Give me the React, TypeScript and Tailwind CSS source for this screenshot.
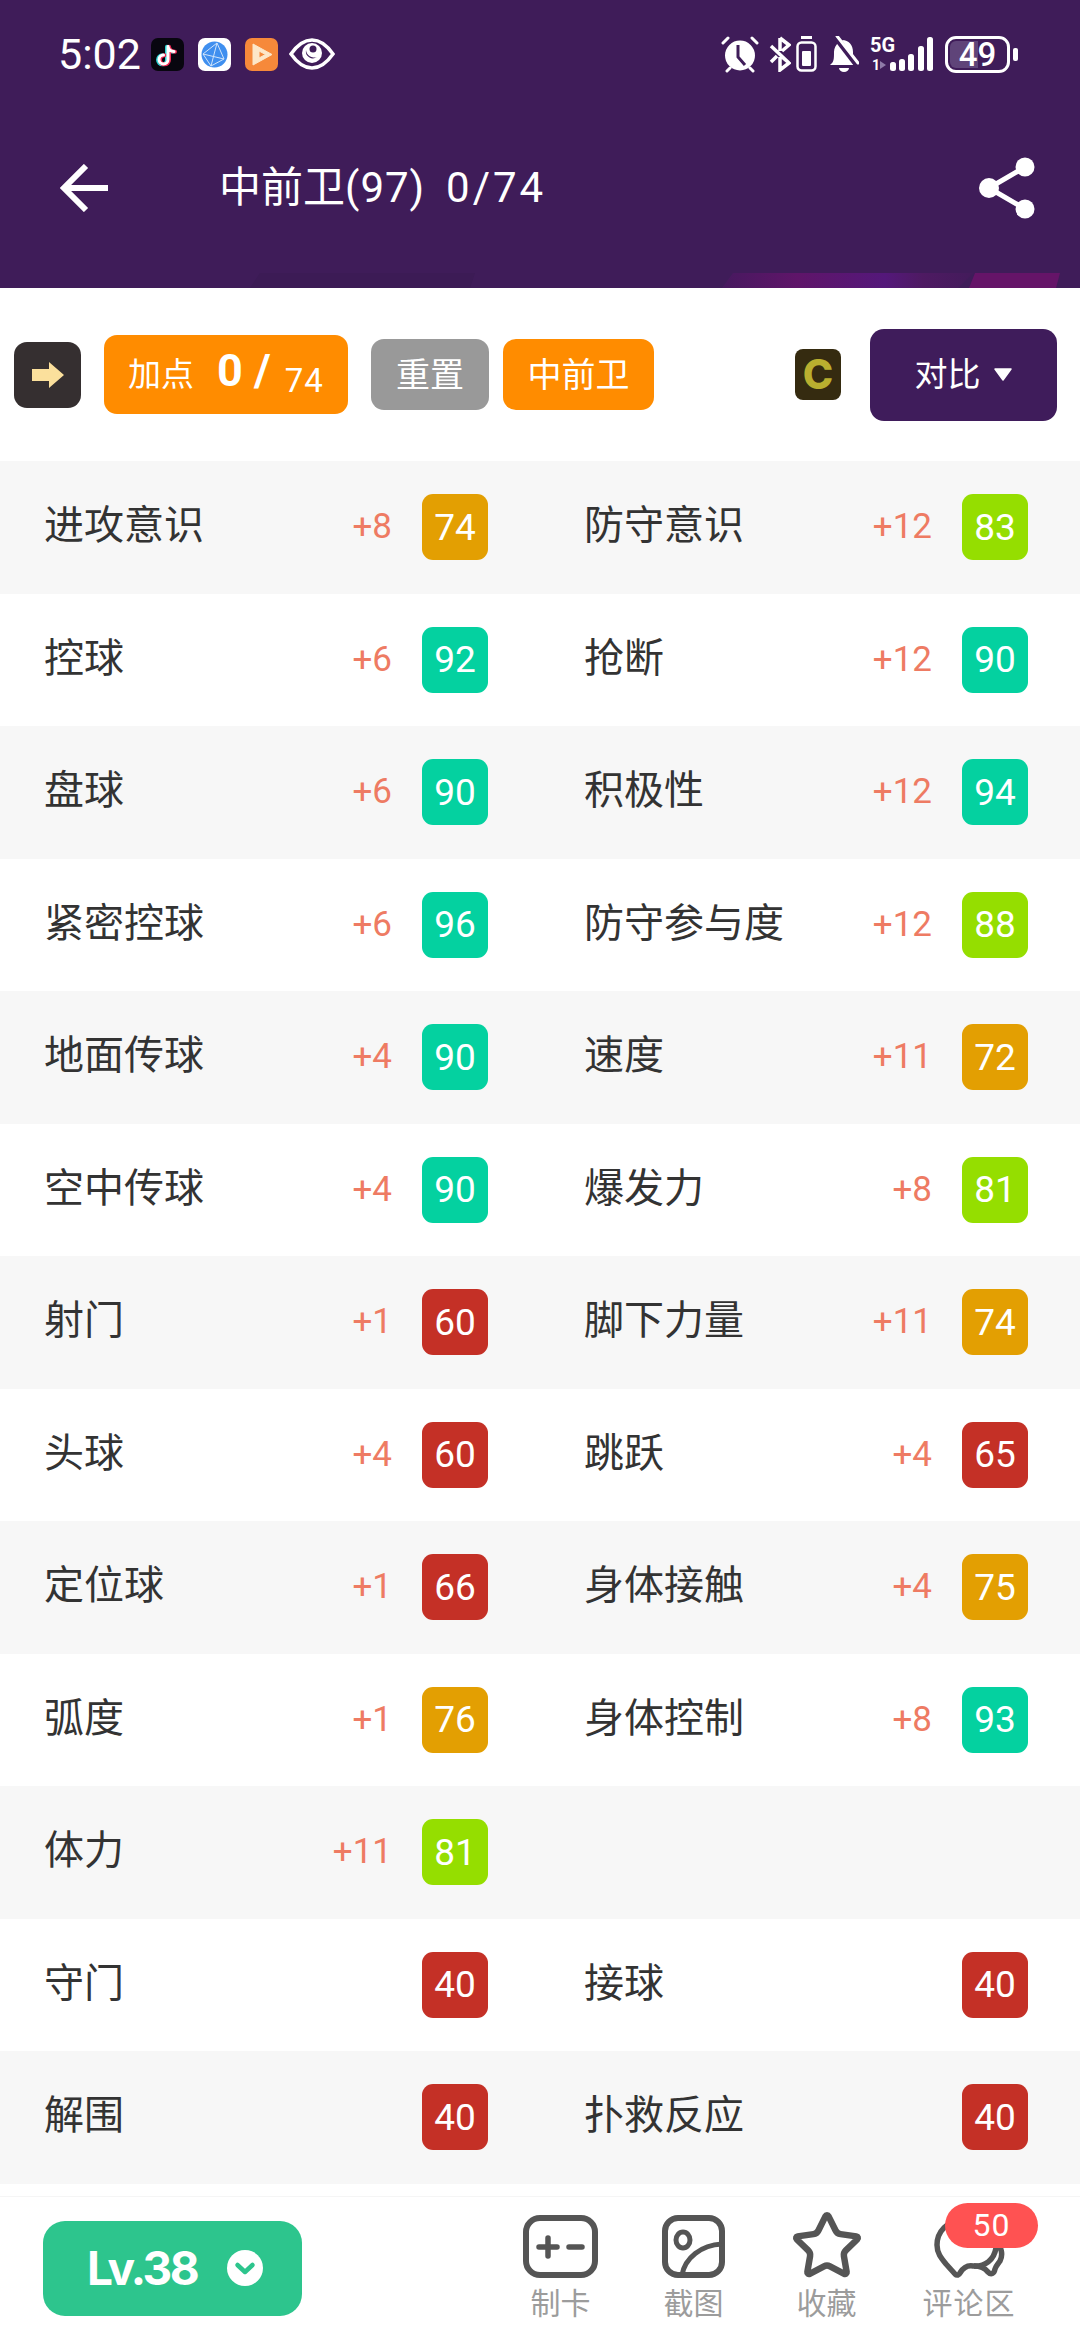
import { Star } from "lucide-react";

type Cell = { name: string; plus?: number; value: number };

// Left and right attribute columns, one pair per row.
const rows: [Cell, Cell | null][] = [
  [{ name: "进攻意识", plus: 8, value: 74 }, { name: "防守意识", plus: 12, value: 83 }],
  [{ name: "控球", plus: 6, value: 92 }, { name: "抢断", plus: 12, value: 90 }],
  [{ name: "盘球", plus: 6, value: 90 }, { name: "积极性", plus: 12, value: 94 }],
  [{ name: "紧密控球", plus: 6, value: 96 }, { name: "防守参与度", plus: 12, value: 88 }],
  [{ name: "地面传球", plus: 4, value: 90 }, { name: "速度", plus: 11, value: 72 }],
  [{ name: "空中传球", plus: 4, value: 90 }, { name: "爆发力", plus: 8, value: 81 }],
  [{ name: "射门", plus: 1, value: 60 }, { name: "脚下力量", plus: 11, value: 74 }],
  [{ name: "头球", plus: 4, value: 60 }, { name: "跳跃", plus: 4, value: 65 }],
  [{ name: "定位球", plus: 1, value: 66 }, { name: "身体接触", plus: 4, value: 75 }],
  [{ name: "弧度", plus: 1, value: 76 }, { name: "身体控制", plus: 8, value: 93 }],
  [{ name: "体力", plus: 11, value: 81 }, null],
  [{ name: "守门", value: 40 }, { name: "接球", value: 40 }],
  [{ name: "解围", value: 40 }, { name: "扑救反应", value: 40 }],
];

function badgeClass(v: number) {
  if (v < 70) return "bg-[#c43026]";
  if (v < 80) return "bg-[#e39f02]";
  if (v < 90) return "bg-[#95de00]";
  return "bg-[#04d1a0]";
}

function Attribute({ cell }: { cell: Cell | null }) {
  if (!cell) return <div />;
  return (
    <div className="flex items-center pl-[44px] pr-[52px]">
      <span className="pb-[2px] text-[40px] leading-[48px] text-[#333333]">{cell.name}</span>
      {cell.plus !== undefined && (
        <span className="ml-auto text-[35px] leading-[40px] text-[#ee7b63]">+{cell.plus}</span>
      )}
      <span
        className={`flex h-[66px] w-[66px] items-center justify-center rounded-[11px] text-[37px] font-[450] leading-none text-white ${
          cell.plus !== undefined ? "ml-[30px]" : "ml-auto"
        } ${badgeClass(cell.value)}`}
      >
        {cell.value}
      </span>
    </div>
  );
}

function StatusLeft() {
  return (
    <div className="flex items-center pl-[58px]">
      <span className="w-[80px] text-[43px] leading-none text-white">5:02</span>
      <svg className="ml-[13px]" width="33" height="33" viewBox="0 0 33 33">
        <rect width="33" height="33" rx="7" fill="#08060f" />
        <g fill="none" strokeWidth="4" strokeLinecap="round">
          <path d="M17 8v13a4.5 4.5 0 1 1-4.5-4.5M17 8c.5 3 3 5 6 5" stroke="#2ad4d4" transform="translate(-1 .8)" />
          <path d="M17 8v13a4.5 4.5 0 1 1-4.5-4.5M17 8c.5 3 3 5 6 5" stroke="#ee2a55" transform="translate(1 .8)" />
          <path d="M17 8v13a4.5 4.5 0 1 1-4.5-4.5M17 8c.5 3 3 5 6 5" stroke="#ffffff" transform="translate(0 .4)" strokeWidth="3" />
        </g>
      </svg>
      <svg className="ml-[14px]" width="33" height="33" viewBox="0 0 33 33">
        <rect width="33" height="33" rx="7" fill="#fff" />
        <circle cx="16.5" cy="16.5" r="13" fill="#3f8fef" />
        <path d="M5 16 19 5l7 16-13 7zM5 16l21 5M19 5l-6 23" fill="none" stroke="#cfe4fb" strokeWidth="1" />
      </svg>
      <svg className="ml-[14px]" width="33" height="33" viewBox="0 0 33 33">
        <rect width="33" height="33" rx="7" fill="#f6893a" />
        <path d="M8 6v21l19-10.500zM14 13v7l6.500-3.500z" fill="#fde7c8" fillRule="evenodd" stroke="#fde7c8" strokeLinejoin="round" />
      </svg>
      <svg className="ml-[11px]" width="46" height="32" viewBox="0 0 46 32">
        <path d="M2 16C9 6 15 2 23 2s14 4 21 14c-7 10-13 14-21 14S9 26 2 16z" fill="none" stroke="#fff" strokeWidth="3.500" />
        <circle cx="23" cy="15" r="10" fill="#fff" />
        <path d="M17 12a7 7 0 0 0 11 7 8 8 0 0 1-11-7z" fill="#3f1d59" />
        <circle cx="24" cy="11" r="3.500" fill="#3f1d59" />
      </svg>
    </div>
  );
}

function StatusRight() {
  return (
    <div className="flex items-center pr-[62px]">
      {/* alarm clock */}
      <svg width="38" height="38" viewBox="0 0 38 38">
        <circle cx="19" cy="20.500" r="15" fill="#fff" />
        <path d="M17 10v12l7 8" fill="none" stroke="#3f1d59" strokeWidth="3" />
        <path d="M2 8l5-5M36 8l-5-5M6 36l3-3M32 36l-3-3" stroke="#fff" strokeWidth="3" strokeLinecap="round" />
      </svg>
      {/* bluetooth, crossed */}
      <svg className="ml-[10px]" width="22" height="36" viewBox="0 0 22 36">
        <path d="M11 2v13M11 21v13l9-7-7-6M13 15l7-6-9-7M2 10l18 17M2 26l6-6" fill="none" stroke="#fff" strokeWidth="3.500" />
      </svg>
      {/* battery saver */}
      <svg className="ml-[5px]" width="21" height="36" viewBox="0 0 21 36">
        <path d="M5 1.500h11" stroke="#fff" strokeWidth="3" />
        <rect x="1.500" y="6.500" width="18" height="28" rx="4" fill="none" stroke="#fff" strokeWidth="2.500" />
        <rect x="6" y="15" width="9" height="15" rx="1" fill="#fff" />
      </svg>
      {/* muted bell */}
      <svg className="ml-[12px]" width="30" height="36" viewBox="0 0 30 36">
        <path d="M1 29c4-3 4-6 4-13 0-4 2-7 4-9l17 22z" fill="#fff" />
        <path d="M13 4c7 0 11 5 11 12 0 3 0 5 1 7z" fill="#fff" />
        <path d="M10 32a5 4 0 0 0 10 0z" fill="#fff" />
        <path d="M4 0l26 34" stroke="#3f1d59" strokeWidth="3" />
        <path d="M8 0l21 27" stroke="#fff" strokeWidth="3" strokeLinecap="round" />
      </svg>
      {/* mobile network */}
      <div className="relative ml-[11px] h-[36px] w-[63px]">
        <span className="absolute left-0 top-0 text-[20px] font-bold leading-[19px] text-white">5G</span>
        <span className="absolute left-[2px] top-[22px] text-[14px] font-bold leading-[14px] text-white">1</span>
        <svg className="absolute left-0 top-0" width="63" height="36" viewBox="0 0 63 36">
          <path d="M10 25l6 4-6 4z" fill="#8f7aa8" />
          <g fill="#fff">
            <rect x="20" y="26" width="6" height="9" rx="2.500" />
            <rect x="29" y="23" width="6" height="12" rx="2.500" />
            <rect x="38" y="18" width="6" height="17" rx="2.500" />
            <rect x="48" y="10" width="6" height="25" rx="2.500" />
            <rect x="57" y="1" width="6" height="34" rx="2.500" />
          </g>
        </svg>
      </div>
      {/* battery */}
      <div className="ml-[12px] flex items-center">
        <div className="relative flex h-[37px] w-[65px] items-center justify-center overflow-hidden rounded-[11px] border-[3px] border-white">
          <div className="absolute inset-y-[2px] left-[2px] w-[28px] rounded-l-[6px] bg-[#5f4479]" />
          <span className="relative text-[33px] font-medium leading-none text-white">49</span>
        </div>
        <div className="ml-[3px] h-[13px] w-[5px] rounded-[2px] bg-white" />
      </div>
    </div>
  );
}

function Header() {
  return (
    <header className="relative h-[288px] shrink-0 bg-[#3f1c59]">
      <div className="flex h-[108px] items-center justify-between">
        <StatusLeft />
        <StatusRight />
      </div>
      <div className="flex h-[160px] items-center pl-[60px] pr-[45px]">
        <svg width="48" height="48" viewBox="0 0 48 48">
          <path d="M48 24H4M26 2 4 24l22 22" fill="none" stroke="#fff" strokeWidth="6" />
        </svg>
        <h1 className="ml-[111px] whitespace-pre text-[42px] font-normal leading-[50px] text-white">
          中前卫<span className="tracking-[1px]">(97)</span>  <span className="tracking-[3px]">0/74</span>
        </h1>
        <svg className="ml-auto" width="56" height="62" viewBox="0 0 56 62">
          <g fill="#fff">
            <circle cx="46" cy="10" r="9.500" />
            <circle cx="10" cy="31" r="10" />
            <circle cx="46" cy="52" r="9.500" />
          </g>
          <path d="M46 10 10 31l36 21" fill="none" stroke="#fff" strokeWidth="5" />
        </svg>
      </div>
      {/* angled stripes along the lower edge of the banner */}
      <svg className="absolute bottom-0 left-0" width="1080" height="15" viewBox="0 0 1080 15">
        <defs>
          <linearGradient id="stripe" x1="0" x2="1" y1="0" y2="0">
            <stop offset="0" stopColor="#47195f" />
            <stop offset="0.3" stopColor="#5f1569" />
            <stop offset="0.65" stopColor="#54187a" />
            <stop offset="0.8" stopColor="#4e1a62" />
            <stop offset="1" stopColor="#431b5b" />
          </linearGradient>
        </defs>
        <path d="M260 0h215l-5 15H250z" fill="#3c1b55" />
        <path d="M733 0h240l-15 15H722z" fill="url(#stripe)" />
        <path d="M975 0h85l-4 15h-87z" fill="#651468" />
      </svg>
    </header>
  );
}

function Toolbar() {
  return (
    <div className="flex h-[173px] shrink-0 items-center pl-[14px] pr-[23px] text-white">
      <div className="flex h-[66px] w-[67px] items-center justify-center rounded-[13px] bg-[#352f30]">
        <svg width="32" height="26" viewBox="0 0 32 26">
          <path d="M0 7h17V0l15 13-15 13v-7H0z" fill="#fbe09c" />
        </svg>
      </div>
      <div className="ml-[23px] flex h-[79px] w-[244px] items-center rounded-[13px] bg-[#ff8c00] pl-[24px]">
        <span className="text-[33px] leading-none">加点</span>
        <span className="ml-[23px] -mt-[8px] whitespace-pre text-[45px] font-bold leading-none">0 /</span>
        <span className="ml-[14px] mt-[12px] text-[33px] leading-none tracking-[1px]">74</span>
      </div>
      <div className="ml-[23px] flex h-[71px] w-[118px] items-center justify-center rounded-[13px] bg-[#999999] text-[34px] leading-none">重置</div>
      <div className="ml-[14px] flex h-[71px] w-[151px] items-center justify-center rounded-[13px] bg-[#ff8c00] text-[34px] leading-none">中前卫</div>
      <div className="ml-auto flex h-[51px] w-[46px] items-center justify-center rounded-[8px] bg-[#352b10] font-['Inter'] text-[41px] font-extrabold leading-none text-[#b9af2f]">C</div>
      <div className="ml-[29px] flex h-[92px] w-[187px] items-center justify-center rounded-[14px] bg-[#3f1c5b]">
        <span className="text-[33px] leading-none">对比</span>
        <svg className="ml-[12px]" width="20" height="14" viewBox="0 0 20 14">
          <path d="M2 1h16L10 12z" fill="#fff" stroke="#fff" strokeWidth="1.500" strokeLinejoin="round" />
        </svg>
      </div>
    </div>
  );
}

function CardIcon() {
  return (
    <svg width="75" height="63" viewBox="0 0 75 63">
      <rect x="3" y="3" width="69" height="57" rx="14" fill="none" stroke="#555" strokeWidth="6" />
      <path d="M16 32h18M25 23v18M46 32h13" stroke="#555" strokeWidth="5.500" strokeLinecap="round" />
    </svg>
  );
}

function ShotIcon() {
  return (
    <svg width="63" height="63" viewBox="0 0 63 63">
      <rect x="3" y="3" width="57" height="57" rx="13" fill="none" stroke="#555" strokeWidth="6" />
      <ellipse cx="21" cy="25" rx="7" ry="8" fill="none" stroke="#555" strokeWidth="5" />
      <path d="M20 60c3-17 19-30 40-31" fill="none" stroke="#555" strokeWidth="5" />
    </svg>
  );
}

function CommentIcon() {
  return (
    <svg width="71" height="63" viewBox="0 0 71 63">
      <path d="M30 5C13 5 3 17 3 30c0 8 4 13 9 19l9 10c2 2 4 1 5-1 3-5 7-8 13-7 12 1 21-6 23-18C64 15 50 5 30 5z" fill="#fff" stroke="#555" strokeWidth="5.500" strokeLinejoin="round" />
      <path d="M62 28c6 4 7 12 4 18-2 3-4 5-5 8-1 5-4 6-7 3-3-4-7-6-14-6" fill="none" stroke="#555" strokeWidth="5.500" strokeLinejoin="round" />
    </svg>
  );
}

function NavItem({ label, width, children }: { label: string; width: string; children: React.ReactNode }) {
  return (
    <div className={`relative flex flex-col items-center ${width}`}>
      <div className="flex h-[63px] items-center justify-center">{children}</div>
      <span className="mt-[8px] text-[30px] leading-[36px] text-[#9c9c9c]">{label}</span>
    </div>
  );
}

function BottomBar() {
  return (
    <footer className="mt-[12px] flex flex-1 border-t border-[#f5f5f5] bg-white pl-[43px] pr-[35px]">
      <div className="mt-[24px] flex h-[95px] w-[259px] items-center rounded-[22px] bg-[#2dc58d] pl-[44px]">
        <span className="font-['Inter'] text-[46px] font-bold leading-none tracking-[-2.5px] text-white">Lv.38</span>
        <svg className="ml-[30px]" width="36" height="36" viewBox="0 0 36 36">
          <circle cx="18" cy="18" r="18" fill="#fff" />
          <path d="M10.500 15 18 22l7.500-7" fill="none" stroke="#2dc58d" strokeWidth="4.500" strokeLinecap="round" strokeLinejoin="round" />
        </svg>
      </div>
      <nav className="ml-auto mt-[18px] flex">
        <NavItem label="制卡" width="w-[133px]"><CardIcon /></NavItem>
        <NavItem label="截图" width="w-[133px]"><ShotIcon /></NavItem>
        <NavItem label="收藏" width="w-[133px]">
          <Star size={74} strokeWidth={2.1} color="#555" />
        </NavItem>
        <NavItem label="评论区" width="w-[152px] tracking-[1px]">
          <CommentIcon />
          <span className="absolute left-[52px] top-[-12px] flex h-[45px] w-[93px] items-center justify-center rounded-full bg-[#ff5252] text-[32px] leading-none text-white">50</span>
        </NavItem>
      </nav>
    </footer>
  );
}

export default function App() {
  return (
    <div className="flex h-[2340px] w-[1080px] flex-col overflow-hidden bg-white font-[Roboto,'Noto_Sans_CJK_SC',sans-serif]">
      <Header />
      <Toolbar />
      <main className="shrink-0">
        {rows.map(([left, right], i) => (
          <div
            key={left.name}
            className={`grid h-[132.5px] grid-cols-2 ${i % 2 === 0 ? "bg-[#f7f7f7]" : "bg-white"}`}
          >
            <Attribute cell={left} />
            <Attribute cell={right} />
          </div>
        ))}
      </main>
      <BottomBar />
    </div>
  );
}
